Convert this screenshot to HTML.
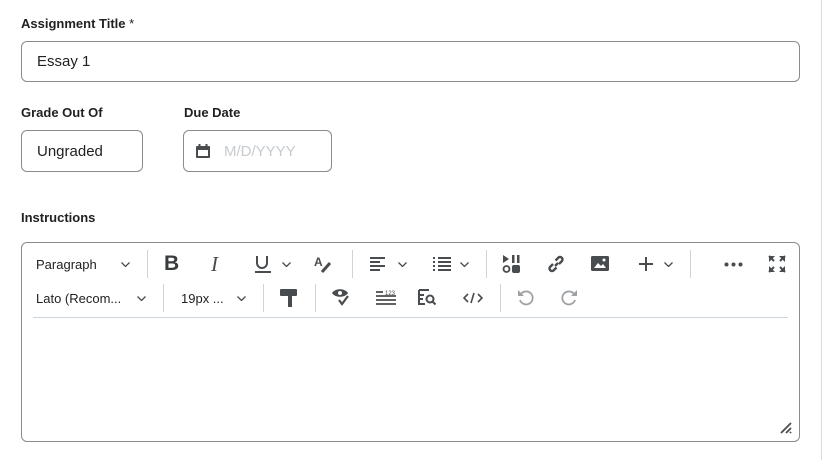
<!DOCTYPE html>
<html><head><style>
body{margin:0;width:822px;height:460px;background:#fff;font-family:"Liberation Sans",sans-serif;color:#202122;position:relative;overflow:hidden}
.a{position:absolute}
.lbl{font-size:13px;font-weight:bold;color:#202122}
.inp{border:1px solid #868c8f;border-radius:6px;box-sizing:border-box;font-size:15px}
.t{font-size:13px;color:#202122}
.sep{width:1px;background:#cdd5dc}
svg{position:absolute}
</style></head><body>
<div class="a" style="left:821px;top:0;width:1px;height:460px;background:#d4dde6"></div>
<div class="a lbl" style="left:21px;top:16px">Assignment Title <span style="font-weight:normal">*</span></div>
<div class="a inp" style="left:21px;top:41px;width:779px;height:41px"><span class="a" style="left:15px;top:11px">Essay 1</span></div>
<div class="a lbl" style="left:21px;top:105px">Grade Out Of</div>
<div class="a lbl" style="left:184px;top:105px">Due Date</div>
<div class="a inp" style="left:21px;top:130px;width:122px;height:42px"><span class="a" style="left:15px;top:12px">Ungraded</span></div>
<div class="a inp" style="left:183px;top:130px;width:149px;height:42px">
<svg style="left:11px;top:13px" width="16" height="15" viewBox="0 0 16 15"><rect x="1" y="2" width="14" height="12" rx="1" fill="#494c4e"/><rect x="3" y="6" width="10" height="6" fill="#fff"/><rect x="3.5" y="0" width="2" height="4" fill="#494c4e"/><rect x="10.5" y="0" width="2" height="4" fill="#494c4e"/></svg>
<span class="a" style="left:40px;top:12px;color:#c6cbcf">M/D/YYYY</span></div>
<div class="a lbl" style="left:21px;top:210px">Instructions</div>
<div class="a inp" style="left:21px;top:242px;width:779px;height:200px">
<div class="a" style="left:11px;top:74px;width:755px;height:1px;background:#cdd5dc"></div>
</div>
<!-- row 1 -->
<div class="a t" style="left:36px;top:257px">Paragraph</div>
<svg style="left:121px;top:262px" width="9" height="5"><path d="M.5 .5l4 4 4-4" stroke="#494c4e" stroke-width="1.3" fill="none"/></svg>
<div class="a sep" style="left:147px;top:250px;height:28px"></div>
<div class="a" style="left:164px;top:252px;font-size:21px;font-weight:bold;color:#3a3d3f">B</div>
<div class="a" style="left:211px;top:252px;font-size:21px;font-style:italic;font-family:'Liberation Serif',serif;color:#494c4e">I</div>
<svg style="left:254px;top:255px" width="18" height="18"><path d="M3 1v7a5 5 0 0 0 10 0v-7" stroke="#494c4e" stroke-width="2" fill="none"/><path d="M1 17h16" stroke="#494c4e" stroke-width="2"/></svg>
<svg style="left:282px;top:262px" width="9" height="5"><path d="M.5 .5l4 4 4-4" stroke="#494c4e" stroke-width="1.3" fill="none"/></svg>
<svg style="left:313px;top:254px" width="20" height="20"><text x="1" y="12" font-size="12" font-weight="bold" fill="#494c4e" font-family="Liberation Sans">A</text><path d="M9 18l8-9" stroke="#494c4e" stroke-width="3"/></svg>
<div class="a sep" style="left:352px;top:250px;height:28px"></div>
<svg style="left:369px;top:256px" width="18" height="16"><path d="M1 2h15M1 6h10M1 10h15M1 14h10" stroke="#494c4e" stroke-width="2"/></svg>
<svg style="left:398px;top:262px" width="9" height="5"><path d="M.5 .5l4 4 4-4" stroke="#494c4e" stroke-width="1.3" fill="none"/></svg>
<svg style="left:432px;top:256px" width="20" height="16"><path d="M1 2h2M1 6h2M1 10h2M1 14h2M6 2h13M6 6h13M6 10h13M6 14h13" stroke="#494c4e" stroke-width="2"/></svg>
<svg style="left:460px;top:262px" width="9" height="5"><path d="M.5 .5l4 4 4-4" stroke="#494c4e" stroke-width="1.3" fill="none"/></svg>
<div class="a sep" style="left:486px;top:250px;height:28px"></div>
<svg style="left:502px;top:254px" width="20" height="20"><path d="M1 1l6 4-6 4z" fill="#494c4e"/><rect x="10" y="1" width="2.5" height="8" fill="#494c4e"/><rect x="15" y="1" width="2.5" height="8" fill="#494c4e"/><circle cx="4.5" cy="15" r="3" stroke="#494c4e" stroke-width="1.8" fill="none"/><rect x="10" y="11" width="8" height="8" rx="2" fill="#494c4e"/></svg>
<svg style="left:546px;top:254px" width="20" height="20"><path d="M9 12l3-3M7 10l-3 3a2.5 2.5 0 003.5 3.5l3-3M13 10l3-3a2.5 2.5 0 00-3.5-3.5l-3 3" stroke="#494c4e" stroke-width="2.4" fill="none"/></svg>
<svg style="left:591px;top:256px" width="18" height="15"><rect x="0" y="0" width="18" height="15" rx="1.5" fill="#494c4e"/><path d="M3 12l4-5 3 3 2-2 3 4z" fill="#fff"/><circle cx="13" cy="4" r="1.5" fill="#fff"/></svg>
<svg style="left:639px;top:257px" width="14" height="14"><path d="M7 0v14M0 7h14" stroke="#494c4e" stroke-width="2"/></svg>
<svg style="left:664px;top:262px" width="9" height="5"><path d="M.5 .5l4 4 4-4" stroke="#494c4e" stroke-width="1.3" fill="none"/></svg>
<div class="a sep" style="left:690px;top:250px;height:28px"></div>
<svg style="left:724px;top:262px" width="20" height="5"><circle cx="2.5" cy="2.5" r="2" fill="#494c4e"/><circle cx="9.5" cy="2.5" r="2" fill="#494c4e"/><circle cx="16.5" cy="2.5" r="2" fill="#494c4e"/></svg>
<svg style="left:767px;top:254px" width="20" height="20"><path d="M2 2h6l-6 6zM18 2h-6l6 6zM2 18h6l-6-6zM18 18h-6l6-6z" fill="#494c4e"/><path d="M2 2l5 5M18 2l-5 5M2 18l5-5M18 18l-5-5" stroke="#494c4e" stroke-width="2"/></svg>
<!-- row 2 -->
<div class="a t" style="left:36px;top:291px">Lato (Recom...</div>
<svg style="left:137px;top:296px" width="9" height="5"><path d="M.5 .5l4 4 4-4" stroke="#494c4e" stroke-width="1.3" fill="none"/></svg>
<div class="a sep" style="left:163px;top:284px;height:28px"></div>
<div class="a t" style="left:181px;top:291px">19px ...</div>
<svg style="left:237px;top:296px" width="9" height="5"><path d="M.5 .5l4 4 4-4" stroke="#494c4e" stroke-width="1.3" fill="none"/></svg>
<div class="a sep" style="left:263px;top:284px;height:28px"></div>
<svg style="left:279px;top:288px" width="20" height="20"><rect x="1" y="1" width="17" height="7" rx="1" fill="#494c4e"/><rect x="9" y="8" width="4" height="11" fill="#494c4e"/></svg>
<div class="a sep" style="left:315px;top:284px;height:28px"></div>
<svg style="left:331px;top:287px" width="22" height="20"><path d="M1 6c3-5 13-5 16 0c-3 5-13 5-16 0z" fill="#494c4e"/><circle cx="9" cy="6" r="2" fill="#fff"/><path d="M8 13l3 4 6-8" stroke="#494c4e" stroke-width="2.2" fill="none"/></svg>
<svg style="left:375px;top:290px" width="22" height="16"><path d="M1 6h20M1 10h20M1 14h20M1 2h7" stroke="#494c4e" stroke-width="1.8"/><text x="10" y="5" font-size="6" fill="#494c4e" font-family="Liberation Sans">123</text></svg>
<svg style="left:418px;top:288px" width="22" height="18"><path d="M1 2h10M1 2v14h6M1 7h5M1 11h4" stroke="#494c4e" stroke-width="2" fill="none"/><circle cx="12" cy="11" r="3.5" stroke="#494c4e" stroke-width="2" fill="none"/><path d="M14.5 13.5l3 3" stroke="#494c4e" stroke-width="2"/></svg>
<svg style="left:463px;top:292px" width="20" height="12"><path d="M5 2l-4 4 4 4M15 2l4 4-4 4M11 1l-3 10" stroke="#494c4e" stroke-width="1.6" fill="none"/></svg>
<div class="a sep" style="left:500px;top:284px;height:28px"></div>
<svg style="left:516px;top:289px" width="20" height="20"><path d="M5 5a6.5 6.5 0 1 1 -1 6" stroke="#9ea2a5" stroke-width="1.8" fill="none"/><path d="M2 1v6h6" fill="#9ea2a5"/></svg>
<svg style="left:559px;top:289px" width="20" height="20"><path d="M15 5a6.5 6.5 0 1 0 1 6" stroke="#9ea2a5" stroke-width="1.8" fill="none"/><path d="M18 1v6h-6" fill="#9ea2a5"/></svg>
<svg style="left:779px;top:421px" width="14" height="14"><path d="M2 12l10-10M7 12l5-5M11 12l1-1" stroke="#494c4e" stroke-width="1.8"/></svg>
</body></html>
